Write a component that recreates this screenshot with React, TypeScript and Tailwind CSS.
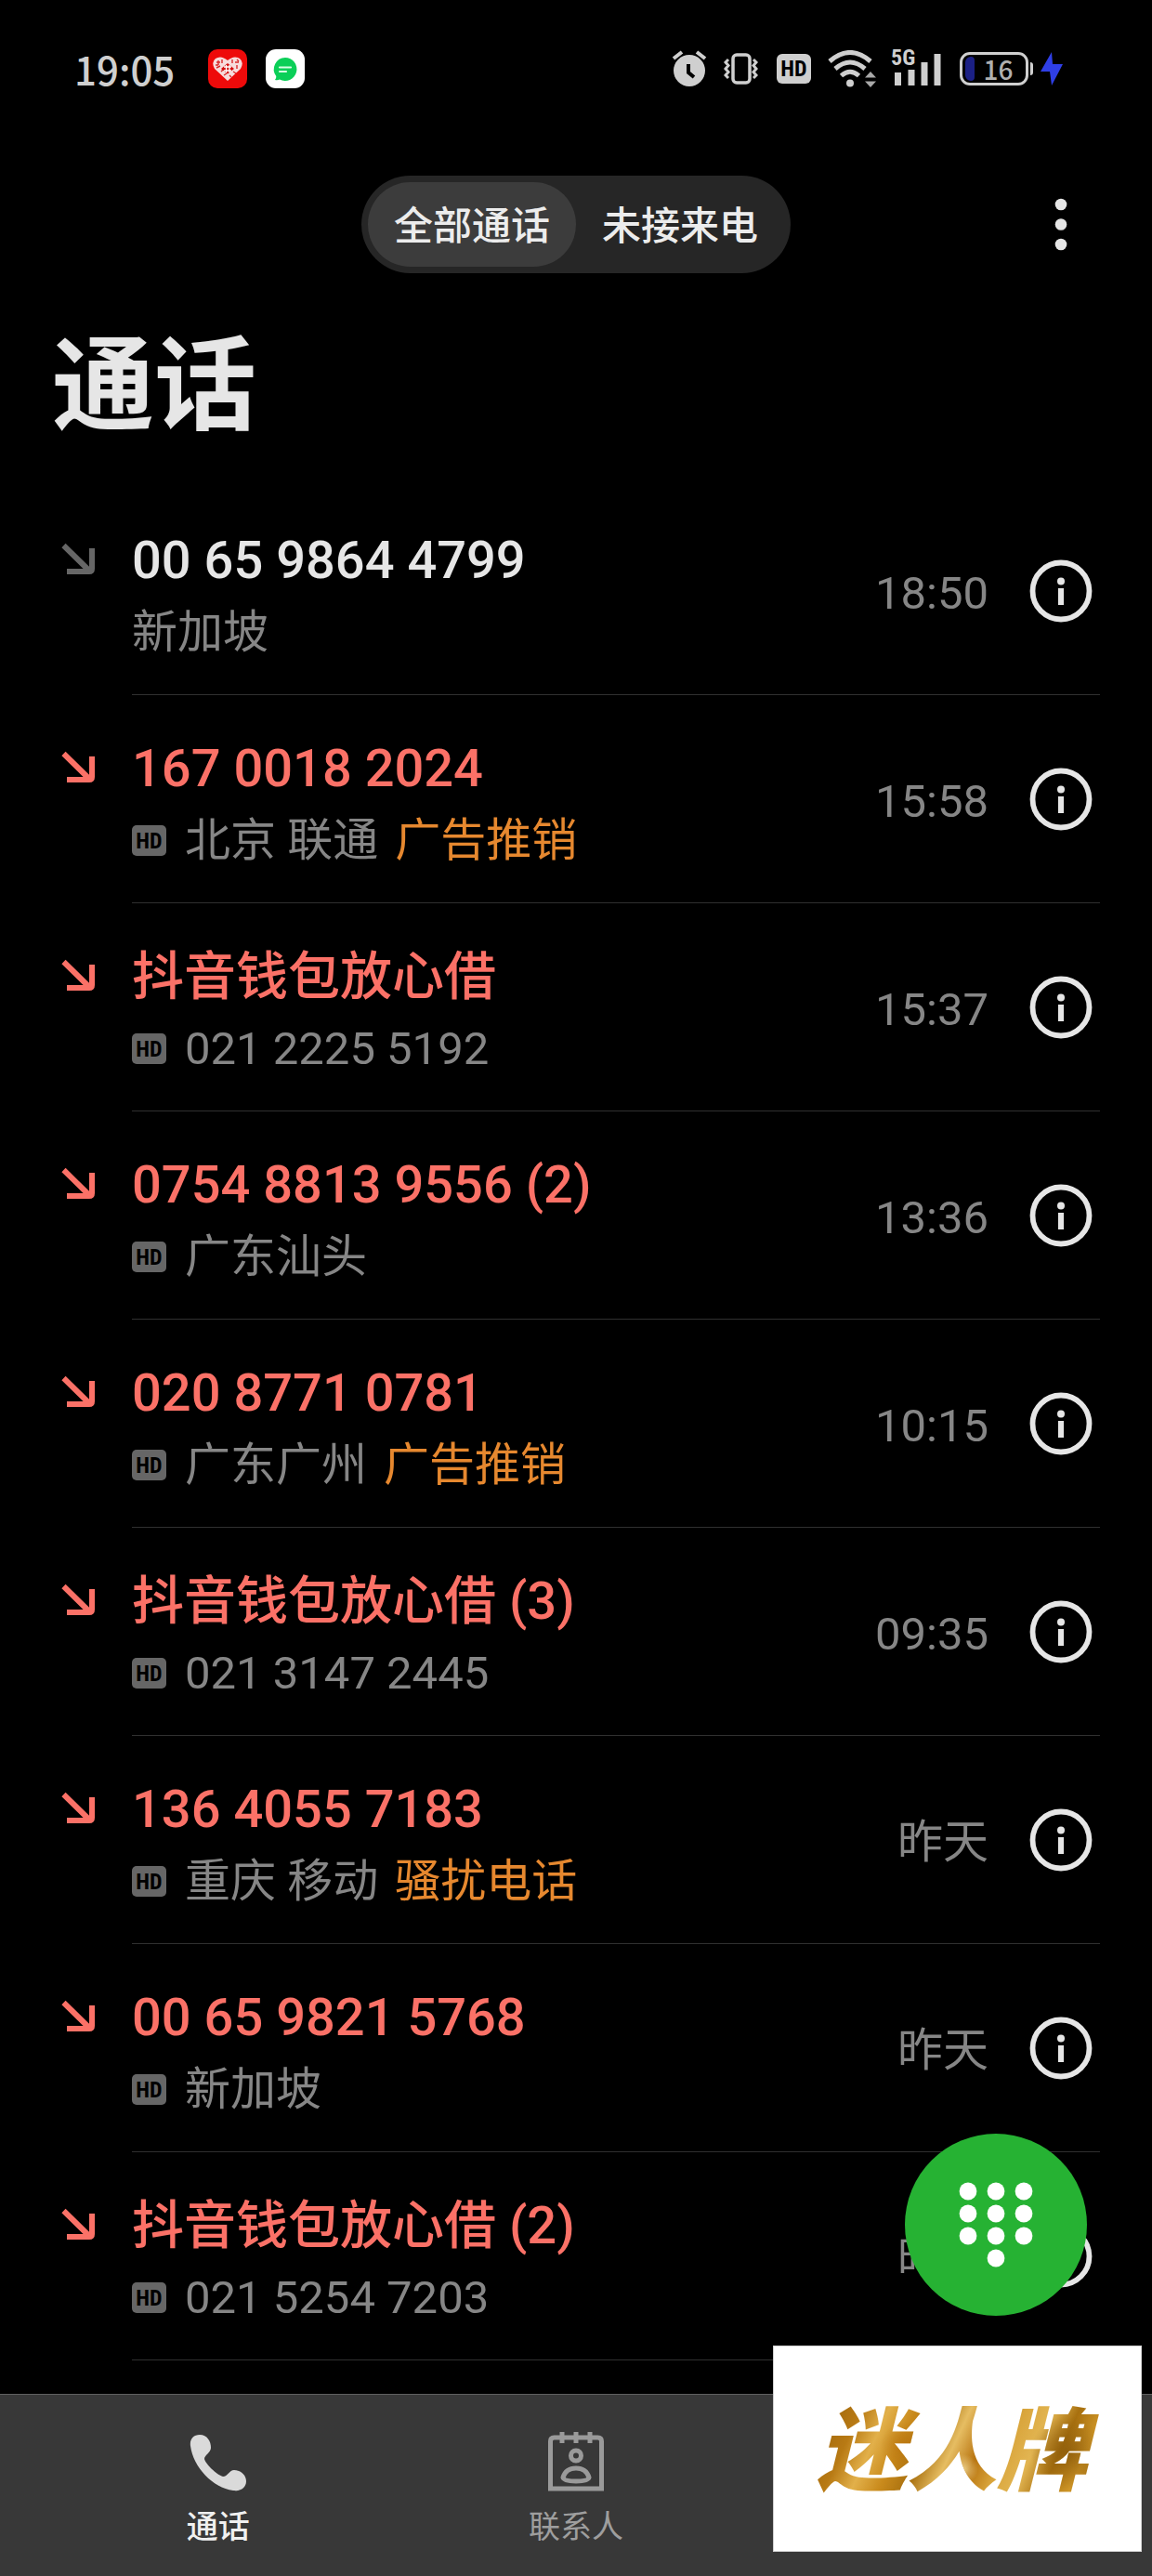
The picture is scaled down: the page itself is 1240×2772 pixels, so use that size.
import { useState } from 'react';

interface CallEntry {
    title: string;
    detail: string;
    tag?: string;
    time: string;
    missed: boolean;
    hd: boolean;
}

const CALLS: CallEntry[] = [
    { title: '00 65 9864 4799', detail: '新加坡', time: '18:50', missed: false, hd: false },
    { title: '167 0018 2024', detail: '北京 联通', tag: '广告推销', time: '15:58', missed: true, hd: true },
    { title: '抖音钱包放心借', detail: '021 2225 5192', time: '15:37', missed: true, hd: true },
    { title: '0754 8813 9556 (2)', detail: '广东汕头', time: '13:36', missed: true, hd: true },
    { title: '020 8771 0781', detail: '广东广州', tag: '广告推销', time: '10:15', missed: true, hd: true },
    { title: '抖音钱包放心借 (3)', detail: '021 3147 2445', time: '09:35', missed: true, hd: true },
    { title: '136 4055 7183', detail: '重庆 移动', tag: '骚扰电话', time: '昨天', missed: true, hd: true },
    { title: '00 65 9821 5768', detail: '新加坡', time: '昨天', missed: true, hd: true },
    { title: '抖音钱包放心借 (2)', detail: '021 5254 7203', time: '昨天', missed: true, hd: true },
];

const FILTERS = ['全部通话', '未接来电'];

const StatusBar = () => (
    <div className="flex h-[148px] items-center justify-between pl-20 pr-24 text-[#cfcfcf]">
        <div className="flex items-center">
            <span className="w-36 font-['Noto_Sans_CJK_SC',sans-serif] text-[42px] leading-none font-medium">19:05</span>
            <svg width="42" height="42" viewBox="0 0 42 42">
                <rect width="42" height="42" rx="10" fill="#ee0a0a" />
                <path d="M21 34 L7 21 Q3 14 8 10 Q14 6 21 12 Q28 6 34 10 Q39 14 35 21 Z" fill="#f7dcdc" />
                <path
                    d="M9 14h4M11 12v5M15 11v4M9 20l4-2M14 24l3-3M26 11v4M29 14h4M31 17v4M27 24l3 2M17 28l3-2M23 28l2 2M8 17h3M31 11l2 2"
                    stroke="#d92a2a"
                    strokeWidth="1.4"
                />
                <path d="M21 15l7 6-7 5.500-7-5.500z" fill="#d40d0d" />
                <path d="M17 19h8M17 23h8M19.500 17v8M23 17v8" stroke="#fff" strokeWidth="1.4" />
            </svg>
            <svg className="ml-5" width="42" height="42" viewBox="0 0 42 42">
                <rect width="42" height="42" rx="11" fill="#fff" />
                <path d="M21 9a12.500 12.500 0 1 1-6 23.500q-2 1.200-5 .5 1.500-1.500 1.300-4A12.500 12.500 0 0 1 21 9z" fill="#0bcf58" />
                <path d="M15 19.500h12M15 24h7" stroke="#d8ffe4" strokeWidth="2.2" strokeLinecap="round" />
            </svg>
        </div>
        <div className="flex items-center">
            <svg width="38" height="40" viewBox="0 0 38 40">
                <circle cx="19" cy="22" r="17" fill="#cfcfcf" />
                <path d="M2 9l9-7M36 9l-9-7" stroke="#cfcfcf" strokeWidth="4" />
                <path d="M18 15v9l6 5" fill="none" stroke="#000" strokeWidth="4" />
            </svg>
            <svg className="ml-[18px]" width="37" height="36" viewBox="0 0 37 36">
                <rect x="10" y="3" width="18" height="30" rx="4" fill="none" stroke="#cfcfcf" strokeWidth="3.5" />
                <path d="M5 8l-3 3 3 3.500-3 3.500 3 3.500-3 3.500 3 3M32 8l3 3-3 3.500 3 3.500-3 3.500 3 3.500-3 3" fill="none" stroke="#cfcfcf" strokeWidth="3" />
            </svg>
            <span className="ml-5 flex h-8 w-[37px] items-center justify-center rounded-md bg-[#cfcfcf] font-['Roboto_Condensed','Liberation_Sans_Narrow',Roboto,sans-serif] text-2xl leading-none font-bold text-black">
                HD
            </span>
            <svg className="ml-[18px]" width="52" height="40" viewBox="0 0 52 40">
                <path d="M2 12Q24-7 46 12M8 20Q24 6 40 20M14.500 27.500Q24 19 33.500 27.500" fill="none" stroke="#cfcfcf" strokeWidth="5" />
                <circle cx="24" cy="35.5" r="4" fill="#cfcfcf" />
                <path d="M46 23l6 6.500H40zM46 40l6-6.500H40z" fill="#a8a8a8" />
            </svg>
            <div className="relative ml-4 h-10 w-[54px]">
                <span className="absolute -top-1 left-0 font-['Roboto_Condensed','Liberation_Sans_Narrow',Roboto,sans-serif] text-2xl leading-none font-bold">5G</span>
                <svg width="54" height="40" viewBox="0 0 54 40">
                    <path d="M7.500 24v14M22 21v17M36 13v25M50 4v34" stroke="#cfcfcf" strokeWidth="7" />
                </svg>
            </div>
            <div className="ml-5 flex items-center">
                <div className="flex h-9 w-[74px] items-center rounded-[11px] border-[3px] border-[#cfcfcf] pl-[3px]">
                    <span className="h-[26px] w-2.5 rounded-l-md rounded-r-sm bg-[#1b2085]" />
                    <span className="flex-1 pr-1 text-center font-['Noto_Sans_CJK_SC',sans-serif] text-[28px] leading-none font-medium text-[#b0b0b0]">16</span>
                </div>
                <span className="ml-0.5 h-3.5 w-[3px] rounded-r-sm bg-[#cfcfcf]" />
            </div>
            <svg className="ml-2" width="24" height="36" viewBox="0 0 24 36">
                <path d="M12 0L0 21h10l2 15L24 13H13z" fill="#2f3fe6" />
            </svg>
        </div>
    </div>
);

const HdBadge = () => (
    <span className="mr-5 flex h-[33px] w-[37px] items-center justify-center rounded-[5px] bg-[#666666] font-['Roboto_Condensed','Liberation_Sans_Narrow',Roboto,sans-serif] text-2xl leading-none font-bold text-black">
        HD
    </span>
);

const CallRow = ({ call }: { call: CallEntry }) => (
    <li className="flex h-56">
        <svg
            className={call.missed ? 'mt-[60px] shrink-0 text-[#fb7167]' : 'mt-[60px] shrink-0 text-[#666666]'}
            width="36"
            height="35"
            viewBox="0 0 36 35"
            fill="none"
            stroke="currentColor"
            strokeWidth="6"
        >
            <path d="M2.500 3L30 30M33 6v22q0 3-3 3H6" />
        </svg>
        <div className="ml-10 flex flex-1 items-center border-b border-[#303030]">
            <div className="flex-1 pt-3">
                <h2 className={call.missed ? 'text-[56px] leading-[78px] font-medium text-[#fb7167]' : 'text-[56px] leading-[78px] font-medium text-[#e6e6e6]'}>
                    {call.title}
                </h2>
                <p className="flex items-center text-[49px] leading-[78px] text-[#868686]">
                    {call.hd && <HdBadge />}
                    <span>{call.detail}</span>
                    {call.tag && <span className="ml-[18px] text-[#e6882f]">{call.tag}</span>}
                </p>
            </div>
            <time className="pt-1.5 text-[49px] text-[#868686]">{call.time}</time>
            <button aria-label="详情" className="mr-2 ml-11">
                <svg width="68" height="68" viewBox="0 0 68 68">
                    <circle cx="34" cy="34" r="30.5" fill="none" stroke="#e6e6e6" strokeWidth="5.8" />
                    <circle cx="34" cy="23.5" r="4" fill="#e6e6e6" />
                    <rect x="31" y="31" width="6" height="18" fill="#e6e6e6" />
                </svg>
            </button>
        </div>
    </li>
);

const Dialpad = () => (
    <svg width="80" height="92" viewBox="0 0 80 92" fill="#fff">
        {[10, 34, 58].map((y) => [10, 40, 70].map((x) => <circle key={`${x}-${y}`} cx={x} cy={y} r="9.4" />))}
        <circle cx="40" cy="82" r="9.4" />
    </svg>
);

export default function App() {
    const [filter, setFilter] = useState(FILTERS[0]);

    return (
        <div className="relative flex min-h-screen flex-col overflow-hidden bg-black font-[Roboto,'Noto_Sans_CJK_SC',sans-serif]" lang="zh-CN">
            <StatusBar />

            <header className="mt-[41px] grid grid-cols-[1fr_auto_1fr] items-center">
                <div className="col-start-2 flex rounded-full bg-[#262626] p-[7px]">
                    {FILTERS.map((name) => (
                        <button
                            key={name}
                            onClick={() => setFilter(name)}
                            className={
                                name === filter
                                    ? 'h-[91px] rounded-full bg-[#3c3c3c] px-7 pt-1 text-[42px] font-medium text-[#ececec]'
                                    : 'h-[91px] rounded-full px-7 pt-1 text-[42px] font-medium text-[#ececec]'
                            }
                        >
                            {name}
                        </button>
                    ))}
                </div>
                <button aria-label="更多" className="mr-20 justify-self-end p-2">
                    <svg width="20" height="60" viewBox="0 0 20 60" fill="#e6e6e6">
                        <circle cx="10" cy="8" r="6.3" />
                        <circle cx="10" cy="29.5" r="6.3" />
                        <circle cx="10" cy="51" r="6.3" />
                    </svg>
                </button>
            </header>

            <main className="flex-1 pr-14 pl-[66px]">
                <h1 className="mt-[58px] -ml-2.5 text-[110px] leading-[130px] font-bold text-[#e6e6e6]">通话</h1>
                <ul className="mt-[42px]">
                    {CALLS.map((call) => (
                        <CallRow key={call.title + call.detail} call={call} />
                    ))}
                </ul>
            </main>

            <nav className="grid h-[196px] grid-cols-3 border-t border-[#606060] bg-[#383838] px-[42px] text-[34px] leading-[44px]">
                <a href="#calls" className="flex flex-col items-center pt-10 font-medium text-[#f0f0f0]">
                    <svg className="mb-3.5" width="64" height="66" viewBox="0 0 64 66">
                        <path
                            d="M12 3C5 3 1 8 2 15C5 38 26 60 48 63C56 64 62 60 62 53C62 46 56 41 49 41C44 41 42 48 37 48C30 46 18 34 17 29C17 25 24 22 24 17C24 10 20 3 12 3Z"
                            fill="#dadada"
                        />
                    </svg>
                    通话
                </a>
                <a href="#contacts" className="flex flex-col items-center pt-10 text-[#9e9e9e]">
                    <svg className="mb-3.5" width="64" height="66" viewBox="0 0 64 66" fill="none" stroke="#9a9a9a" strokeWidth="5">
                        <path d="M4.500 61V10q0-4 4-4h47q4 0 4 4v51z" />
                        <path d="M17 0v12M32 0v12M47 0v12" />
                        <circle cx="32" cy="25.5" r="5.5" />
                        <path d="M32 39Q43 39 46 49Q45 53 32 53Q19 53 18 49Q21 39 32 39Z" />
                    </svg>
                    联系人
                </a>
            </nav>

            <button aria-label="拨号" className="absolute right-[70px] bottom-[280px] flex size-[196px] items-center justify-center rounded-full bg-[#26b233]">
                <Dialpad />
            </button>

            <div className="absolute right-[11px] bottom-[26px] flex h-[222px] w-[397px] items-center justify-center border border-[#d0d0d0] bg-white pt-2">
                <span className="bg-[radial-gradient(circle_at_32%_45%,#b8740fcc_0,transparent_12%),radial-gradient(circle_at_88%_50%,#8a5a0acc_0,transparent_14%),radial-gradient(circle_at_52%_65%,#f3dd9ccc_0,transparent_9%),linear-gradient(115deg,#a0670c_6%,#b87a14_16%,#e2b04a_24%,#c98a1c_32%,#a8700f_40%,#e6bd62_48%,#b87410_56%,#d9a53c_64%,#e2b552_72%,#a8700f_80%,#cf9628_88%,#96620a_96%)] bg-clip-text pr-4 pl-1 text-[97px] leading-[120px] font-black text-transparent italic">
                    迷人牌
                </span>
            </div>
        </div>
    );
}
